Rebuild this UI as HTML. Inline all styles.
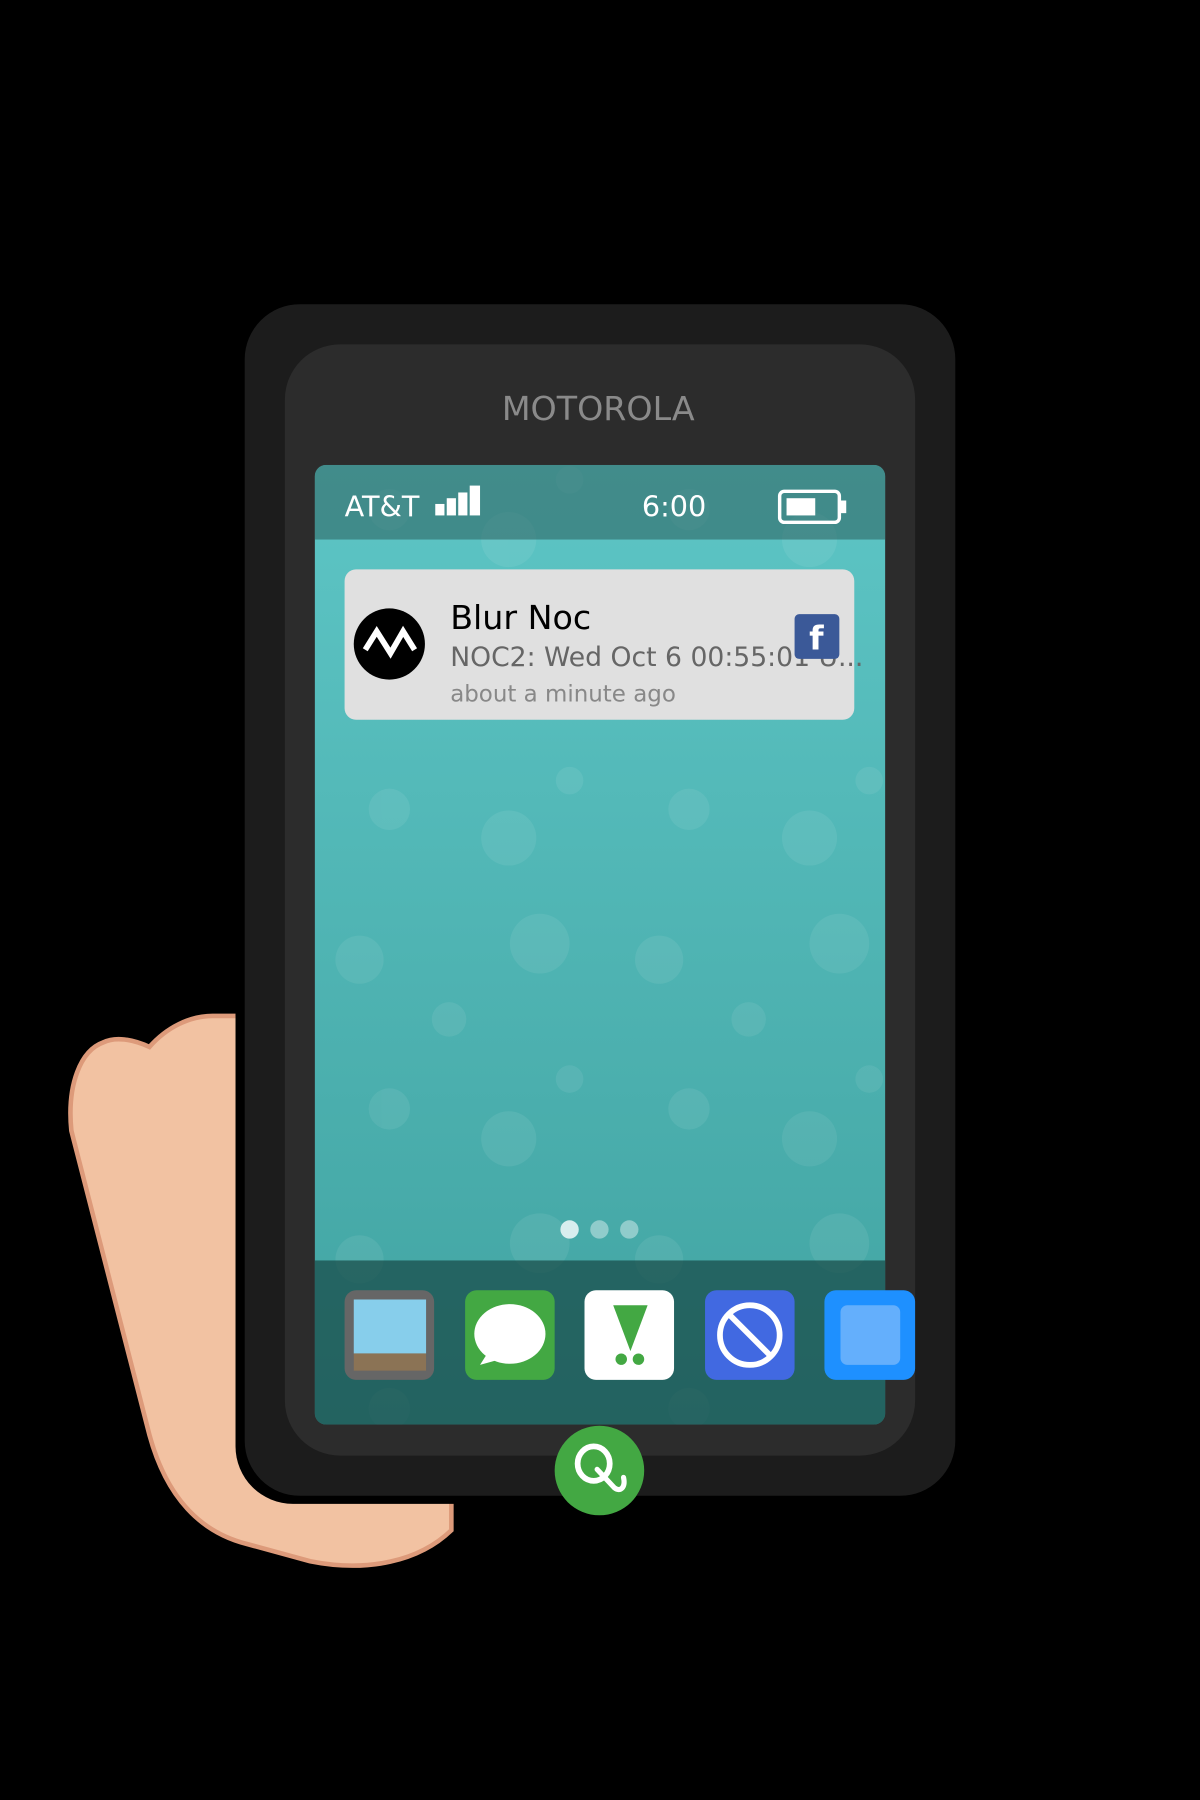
<!DOCTYPE html>
<html><head><meta charset="utf-8"><style>html,body{margin:0;padding:0;background:#000;}svg{display:block}</style></head>
<body>
<svg width="1200" height="1800" viewBox="0 0 1045 1568" xmlns="http://www.w3.org/2000/svg" font-family="DejaVu Sans, Liberation Sans, sans-serif">
<defs>
<linearGradient id="scr" x1="0" y1="0" x2="0" y2="1">
<stop offset="0" stop-color="#5dc5c5"/><stop offset="1" stop-color="#41a3a1"/>
</linearGradient>
<clipPath id="sc"><rect x="274" y="405" width="497" height="836" rx="10"/></clipPath>
</defs>
<rect width="1045" height="1568" fill="#000"/>
<path d="M230 885 L185 885 C165 885 145 895 130 912 C115 905 100 903 90 908 C70 915 58 945 62 985 L130 1250 C145 1305 175 1335 215 1345 L270 1360 C320 1370 365 1360 393 1333 L393 1290 L230 1290 Z" fill="#f2c2a2"/>
<path d="M205 885 L185 885 C165 885 145 895 130 912 C115 905 100 903 90 908 C70 915 58 945 62 985 L130 1250 C145 1305 175 1335 215 1345 L270 1360 C320 1370 365 1360 393 1333 L393 1305" fill="none" stroke="#dd9a7a" stroke-width="4"/>
<rect x="205" y="272" width="619" height="1038" rx="50" fill="#000"/>
<rect x="213" y="265" width="619" height="1038" rx="48" fill="#1c1c1c"/>
<rect x="248" y="300" width="549" height="968" rx="48" fill="#2c2c2c"/>
<text x="521" y="366" text-anchor="middle" font-size="29" fill="#8a8a8a">MOTOROLA</text>
<g clip-path="url(#sc)">
<rect x="274" y="405" width="497" height="836" fill="url(#scr)"/>
<g fill="#fff" opacity="0.07">
<circle cx="443" cy="470" r="24"/><circle cx="705" cy="470" r="24"/><circle cx="496" cy="418" r="12"/><circle cx="339" cy="444" r="18"/><circle cx="600" cy="444" r="18"/><circle cx="339" cy="705" r="18"/><circle cx="443" cy="730" r="24"/><circle cx="600" cy="705" r="18"/><circle cx="705" cy="730" r="24"/><circle cx="496" cy="680" r="12"/><circle cx="757" cy="680" r="12"/>
<circle cx="313" cy="836" r="21"/><circle cx="470" cy="822" r="26"/><circle cx="574" cy="836" r="21"/><circle cx="731" cy="822" r="26"/><circle cx="391" cy="888" r="15"/><circle cx="652" cy="888" r="15"/>
<circle cx="339" cy="966" r="18"/><circle cx="443" cy="992" r="24"/><circle cx="600" cy="966" r="18"/><circle cx="705" cy="992" r="24"/><circle cx="496" cy="940" r="12"/><circle cx="757" cy="940" r="12"/>
<circle cx="313" cy="1097" r="21"/><circle cx="470" cy="1083" r="26"/><circle cx="574" cy="1097" r="21"/><circle cx="731" cy="1083" r="26"/>
<circle cx="339" cy="1227" r="18"/><circle cx="600" cy="1227" r="18"/>
</g>
<rect x="274" y="405" width="497" height="65" fill="#2e6664" opacity="0.6"/>
<rect x="274" y="1098" width="497" height="143" fill="#1a4d4b" opacity="0.75"/>
</g>
<text x="300" y="450" font-size="25" fill="#fff">AT&amp;T</text>
<g fill="#fff"><rect x="379" y="439" width="8" height="10"/><rect x="389" y="434" width="8" height="15"/><rect x="399" y="429" width="8" height="20"/><rect x="409" y="423" width="9" height="26"/></g>
<text x="587" y="450" font-size="25" fill="#fff" text-anchor="middle">6:00</text>
<rect x="679" y="428" width="52" height="27" rx="4" fill="none" stroke="#fff" stroke-width="3"/>
<rect x="685" y="434" width="25" height="15" fill="#fff"/><rect x="732" y="436" width="5" height="11" fill="#fff"/>
<rect x="300" y="496" width="444" height="131" rx="10" fill="#e0e0e0"/>
<circle cx="339" cy="561" r="31" fill="#000"/>
<path d="M318 566 L328 550 L340 569 L351 550 L361 566" fill="none" stroke="#fff" stroke-width="5" stroke-linejoin="miter"/>
<text x="392" y="548" font-size="29" fill="#000">Blur Noc</text>
<text x="392" y="580" font-size="23.2" fill="#666">NOC2: Wed Oct 6 00:55:01 U...</text>
<text x="392" y="611" font-size="20" fill="#888">about a minute ago</text>
<rect x="692" y="535" width="39" height="39" rx="4" fill="#3b5998"/>
<text x="711" y="566" font-size="29" font-weight="bold" fill="#fff" text-anchor="middle">f</text>
<circle cx="496" cy="1071" r="8" fill="#d8eeee"/><circle cx="522" cy="1071" r="8" fill="#fff" opacity="0.4"/><circle cx="548" cy="1071" r="8" fill="#fff" opacity="0.4"/>
<rect x="300" y="1124" width="78" height="78" rx="10" fill="#666"/>
<rect x="308" y="1132" width="63" height="47" fill="#87ceeb"/><rect x="308" y="1179" width="63" height="15" fill="#8b7355"/>
<rect x="405" y="1124" width="78" height="78" rx="10" fill="#43a843"/>
<ellipse cx="444" cy="1162" rx="31" ry="26" fill="#fff"/><path d="M425 1178 L418 1189 L436 1184 Z" fill="#fff"/>
<rect x="509" y="1124" width="78" height="78" rx="10" fill="#fff"/>
<path d="M534 1137 L564 1137 L549 1177 Z" fill="#43a843"/><circle cx="541" cy="1184" r="5" fill="#43a843"/><circle cx="556" cy="1184" r="5" fill="#43a843"/>
<rect x="614" y="1124" width="78" height="78" rx="10" fill="#4169e1"/>
<circle cx="653" cy="1163" r="26" fill="none" stroke="#fff" stroke-width="5"/><path d="M635 1145 L671 1181" stroke="#fff" stroke-width="5"/>
<rect x="718" y="1124" width="79" height="78" rx="10" fill="#1e90ff"/>
<rect x="732" y="1137" width="52" height="52" rx="6" fill="#64affc"/>
<circle cx="522" cy="1281" r="39" fill="#43a843"/>
<ellipse cx="517" cy="1275" rx="14" ry="15" fill="none" stroke="#fff" stroke-width="5"/>
<path d="M520 1280 L535 1296 C540 1300 545 1296 543 1287" fill="none" stroke="#fff" stroke-width="4.5" stroke-linecap="round"/>
</svg>
</body></html>
